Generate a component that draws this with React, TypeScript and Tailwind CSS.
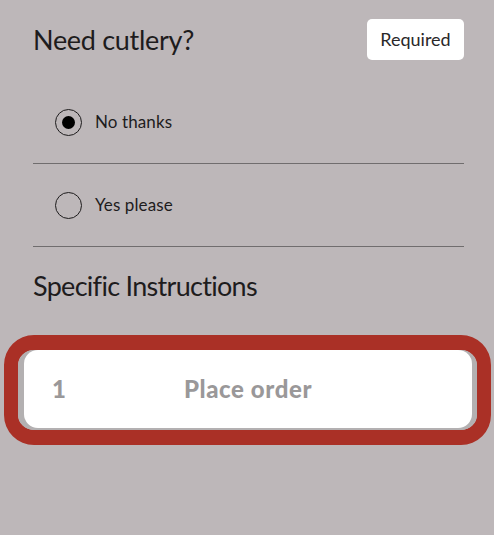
const options = [
  { label: 'No thanks', checked: true },
  { label: 'Yes please', checked: false },
];

export default function App() {
  return (
    <div className="min-h-[535px] w-full bg-[#bdb7b9] font-['Lato','Noto_Sans',sans-serif] text-[#1e1c1d]">
      <div className="pl-[33px] pr-[30px] pt-[19px]">
        <div className="flex h-[41px] items-center justify-between">
          <h2 className="text-[27px] leading-[32px] tracking-[-0.3px]">Need cutlery?</h2>
          <span className="flex h-[41px] w-[97px] items-center justify-center rounded-[5px] bg-white text-[18px] text-[#2a2829]">
            Required
          </span>
        </div>

        <div className="mt-[21px]">
          {options.map((o) => (
            <label
              key={o.label}
              className="flex h-[83px] items-center gap-[13px] border-b border-[#706d6e] pl-[22px]"
            >
              <span className="flex h-[27px] w-[27px] items-center justify-center rounded-full border border-[#1e1c1d]">
                {o.checked && <span className="h-[13px] w-[13px] rounded-full bg-black" />}
              </span>
              <span className="text-[17px] tracking-[0.1px]">{o.label}</span>
            </label>
          ))}
        </div>

        <h3 className="mt-[23px] text-[27px] leading-[32px] tracking-[-0.7px]">Specific Instructions</h3>
      </div>

      {/* highlighted button */}
      <div className="ml-[4px] mr-[3px] mt-[33px] rounded-[30px] border-[14px] border-b-[15px] border-t-[15px] border-[#aa3026]">
        <div className="h-[80px] rounded-[16px] bg-[#b3b0b1] pb-[2px] pl-[6px] pr-[5px]">
          <div className="grid h-full grid-cols-[1fr_auto_1fr] items-center rounded-[14px] bg-white px-[28px] text-[#9a9899]">
            <span className="text-[24px] font-black">1</span>
            <span className="text-[24px] font-black tracking-[0.6px]">Place order</span>
            <span />
          </div>
        </div>
      </div>
    </div>
  );
}
